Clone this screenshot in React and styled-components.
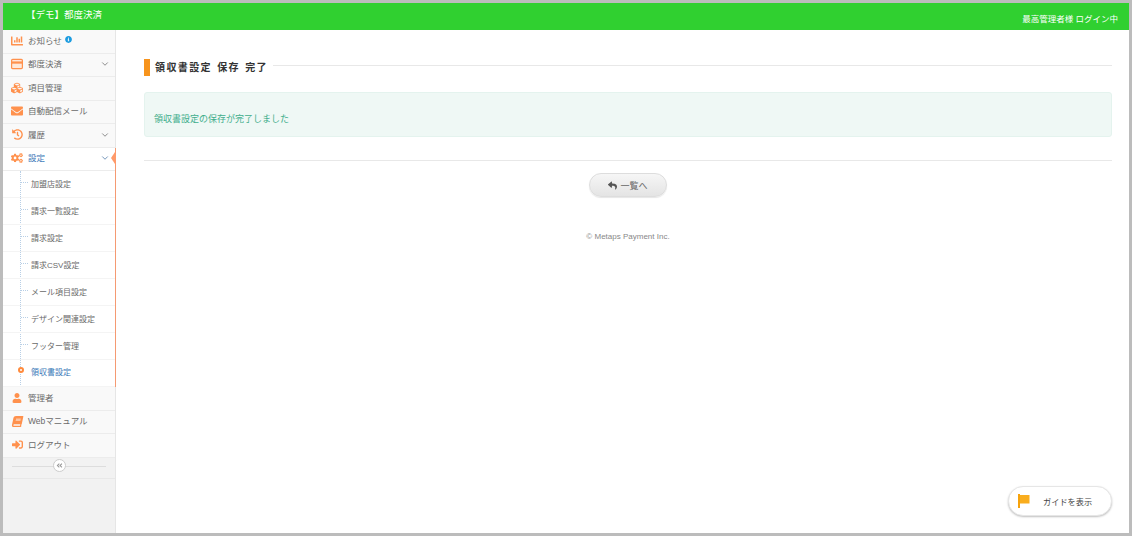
import React from "react";
import styled, { createGlobalStyle } from "styled-components";
import {
  FaChartBar, FaCubes, FaEnvelope, FaHistory, FaCogs, FaUser, FaBook,
  FaSignInAlt, FaReply, FaInfoCircle, FaAngleDoubleLeft,
} from "react-icons/fa";
import { ChevronDown } from "lucide-react";

const Global = createGlobalStyle`
  html, body { margin: 0; padding: 0; background: #fff; }
  body { font-family: "Liberation Sans", "Noto Sans CJK JP", sans-serif; }
`;

const Frame = styled.div`
  box-sizing: border-box;
  width: 1132px;
  height: 536px;
  border: 3px solid #bcbcbc;
  display: flex;
  flex-direction: column;
  overflow: hidden;
  background: #fff;
`;

const Header = styled.header`
  height: 27px;
  flex: none;
  background: #30d030;
  color: #fff;
  display: flex;
  align-items: center;
  justify-content: space-between;
  padding: 0 11px 0 23px;
`;
const Brand = styled.div`
  font-size: 9.5px;
  margin-top: -5px;
`;
const LoginInfo = styled.div`
  font-size: 8.5px;
  margin-top: 3px;
`;

const Body = styled.div`
  flex: 1;
  display: flex;
  min-height: 0;
`;

const Sidebar = styled.nav`
  width: 113px;
  flex: none;
  box-sizing: border-box;
  background: #f2f2f2;
  border-right: 1px solid #e6e6e6;
  display: flex;
  flex-direction: column;
`;

const Row = styled.div`
  position: relative;
  box-sizing: border-box;
  height: 23.5px;
  flex: none;
  display: flex;
  align-items: center;
  padding: 0 5px 3px 8px;
  gap: 5px;
  background: ${(p) => (p.$active ? "#fff" : "#f9f9f9")};
  border-bottom: 1px solid #ececec;
  color: ${(p) => (p.$active ? "#3a78b8" : "#6a6a6a")};
  font-size: 8.5px;
`;
const IconSlot = styled.span`
  width: 12px;
  flex: none;
  display: flex;
  justify-content: center;
  margin-top: 2px;
  color: #ff914d;
  font-size: ${(p) => p.$size || 12}px;
  transform: ${(p) => (p.$skew ? "skewX(-12deg)" : "none")};
`;
const Label = styled.span`
  flex: 1;
  white-space: nowrap;
  display: flex;
  align-items: center;
  gap: 3px;
`;
const Info = styled.span`
  display: flex;
  color: #1c9ce0;
  font-size: 7px;
`;
const Chevron = styled.span`
  display: flex;
  margin-top: 2px;
  color: ${(p) => (p.$active ? "#5b83ad" : "#777")};
`;
const ActiveEdge = styled.span`
  position: absolute;
  right: -1px;
  top: 0;
  bottom: -1px;
  border-right: 1px solid #f59a72;
`;
const ActiveNotch = styled.span`
  position: absolute;
  right: -1px;
  top: 3px;
  width: 5px;
  height: 15px;
  background: #ff9a6a;
  clip-path: polygon(100% 0, 100% 100%, 0 50%);
`;

const SubList = styled.div`
  position: relative;
  background: #fff;
  border-right: 1px solid #f59a72;
  margin-right: -1px;
  &::before {
    content: "";
    position: absolute;
    left: 17px;
    top: 0;
    bottom: 0;
    border-left: 1px dotted #b8cfe6;
  }
`;
const SubRow = styled.div`
  position: relative;
  box-sizing: border-box;
  height: 27px;
  display: flex;
  align-items: center;
  padding: 0 0 ${(p) => (p.$active ? 3 : 2)}px 28px;
  font-size: 8px;
  color: ${(p) => (p.$active ? "#3a78b8" : "#6a6a6a")};
  border-bottom: 1px solid #f4f4f4;
  &::before {
    content: "";
    position: absolute;
    left: 18px;
    top: 11px;
    width: 7px;
    border-top: 1px dotted #b8cfe6;
    display: ${(p) => (p.$active ? "none" : "block")};
  }
`;
const Dot = styled.span`
  position: absolute;
  left: 15px;
  top: 7px;
  width: 6px;
  height: 6px;
  box-sizing: border-box;
  border: 2px solid #ff8a3c;
  border-radius: 50%;
  background: #fff;
  z-index: 1;
`;

const CollapseRow = styled.div`
  height: 21px;
  box-sizing: border-box;
  flex: none;
  display: flex;
  align-items: center;
  justify-content: center;
  position: relative;
  border-bottom: 1px solid #e8e8e8;
  &::before {
    content: "";
    position: absolute;
    left: 9px;
    right: 9px;
    top: 8px;
    border-top: 1px solid #ddd;
  }
`;
const CollapseBtn = styled.span`
  position: relative;
  width: 11px;
  height: 11px;
  margin-top: -4px;
  border: 1px solid #ccc;
  border-radius: 50%;
  background: #fff;
  color: #999;
  font-size: 7px;
  display: flex;
  align-items: center;
  justify-content: center;
`;

const Main = styled.main`
  flex: 1;
  min-width: 0;
  position: relative;
  padding: 29px 17px 0 28px;
  display: flex;
  flex-direction: column;
`;
const TitleRow = styled.div`
  display: flex;
  align-items: center;
  gap: 5px;
  height: 17px;
  &::after {
    content: "";
    flex: 1;
    border-top: 1px solid #e8e8e8;
    margin-top: -4px;
  }
`;
const TitleMark = styled.span`
  width: 6px;
  height: 17px;
  background: #f7941d;
`;
const Title = styled.h1`
  margin: -2px 0 0;
  font-size: 10px;
  font-weight: 700;
  letter-spacing: 1.4px;
  word-spacing: 1px;
  color: #333;
  white-space: nowrap;
`;
const Notice = styled.div`
  margin-top: 16px;
  height: 45px;
  box-sizing: border-box;
  background: #eff8f5;
  border: 1px solid #e4f3ee;
  border-radius: 3px;
  padding: 7px 9px 0;
  display: flex;
  align-items: center;
  font-size: 9px;
  color: #3fae8c;
`;
const Divider = styled.hr`
  margin: 23px 0 0;
  border: 0;
  border-top: 1px solid #e8e8e8;
`;
const BackRow = styled.div`
  display: flex;
  justify-content: center;
  margin-top: 12px;
`;
const BackButton = styled.button`
  width: 78px;
  height: 24px;
  border: 1px solid #ddd;
  border-radius: 12px;
  background: linear-gradient(#f6f6f6, #e4e4e4);
  box-shadow: 0 1px 1px rgba(0, 0, 0, 0.1);
  color: #666;
  font-family: inherit;
  font-size: 9px;
  display: flex;
  align-items: center;
  justify-content: center;
  gap: 3px;
  padding: 0;
`;
const BackIcon = styled.span`
  display: flex;
  color: #555;
  font-size: 9px;
`;
const Copyright = styled.div`
  margin-top: 35px;
  text-align: center;
  font-size: 8px;
  color: #888;
`;
const GuideButton = styled.button`
  position: absolute;
  right: 17px;
  bottom: 17px;
  width: 104px;
  height: 30px;
  box-sizing: border-box;
  border: 1px solid #e6e6e6;
  border-radius: 15px;
  background: #fff;
  box-shadow: 0 1px 2px rgba(0, 0, 0, 0.25);
  font-family: inherit;
  font-size: 8.2px;
  color: #444;
  display: flex;
  align-items: center;
  padding: 0 0 0 9px;
  gap: 13px;
`;

const CardIcon = () => (
  <svg width="14" height="12" viewBox="0 0 14 12">
    <rect x="0.7" y="0.7" width="12.6" height="10.6" rx="1.2" fill="#ffe9da" stroke="#ff914d" strokeWidth="1.4" />
    <rect x="1" y="3" width="12" height="2.6" fill="#ff914d" />
  </svg>
);
const FlagIcon = () => (
  <svg width="12" height="14" viewBox="0 0 12 14">
    <rect x="0" y="0" width="2" height="14" fill="#f7a30c" />
    <path d="M2 1 H11.5 V9.5 H2 Z" fill="#f9ad1e" />
  </svg>
);

const topItems = [
  { icon: FaChartBar, label: "お知らせ", info: true },
  { icon: CardIcon, label: "都度決済", chevron: true },
  { icon: FaCubes, label: "項目管理" },
  { icon: FaEnvelope, label: "自動配信メール" },
  { icon: FaHistory, label: "履歴", chevron: true, size: 11 },
  { icon: FaCogs, label: "設定", chevron: true, active: true },
];
const subItems = ["加盟店設定", "請求一覧設定", "請求設定", "請求CSV設定", "メール項目設定", "デザイン関連設定", "フッター管理"];
const bottomItems = [
  { icon: FaUser, label: "管理者", size: 10 },
  { icon: FaBook, label: "Webマニュアル", size: 11, skew: true },
  { icon: FaSignInAlt, label: "ログアウト", size: 11 },
];

function NavRow({ item }) {
  const Icon = item.icon;
  return (
    <Row $active={item.active}>
      <IconSlot $size={item.size} $skew={item.skew}><Icon /></IconSlot>
      <Label>
        {item.label}
        {item.info && <Info><FaInfoCircle /></Info>}
      </Label>
      {item.chevron && <Chevron $active={item.active}><ChevronDown size={10} strokeWidth={2} /></Chevron>}
      {item.active && <ActiveEdge />}
      {item.active && <ActiveNotch />}
    </Row>
  );
}

export default function App() {
  return (
    <>
      <Global />
      <Frame>
        <Header>
          <Brand>【デモ】都度決済</Brand>
          <LoginInfo>最高管理者様 ログイン中</LoginInfo>
        </Header>
        <Body>
          <Sidebar>
            {topItems.map((item) => <NavRow key={item.label} item={item} />)}
            <SubList>
              {subItems.map((s) => <SubRow key={s}>{s}</SubRow>)}
              <SubRow $active><Dot />領収書設定</SubRow>
            </SubList>
            {bottomItems.map((item) => <NavRow key={item.label} item={item} />)}
            <CollapseRow>
              <CollapseBtn><FaAngleDoubleLeft /></CollapseBtn>
            </CollapseRow>
          </Sidebar>
          <Main>
            <TitleRow>
              <TitleMark />
              <Title>領収書設定 保存 完了</Title>
            </TitleRow>
            <Notice>領収書設定の保存が完了しました</Notice>
            <Divider />
            <BackRow>
              <BackButton><BackIcon><FaReply /></BackIcon>一覧へ</BackButton>
            </BackRow>
            <Copyright>© Metaps Payment Inc.</Copyright>
            <GuideButton><FlagIcon />ガイドを表示</GuideButton>
          </Main>
        </Body>
      </Frame>
    </>
  );
}
